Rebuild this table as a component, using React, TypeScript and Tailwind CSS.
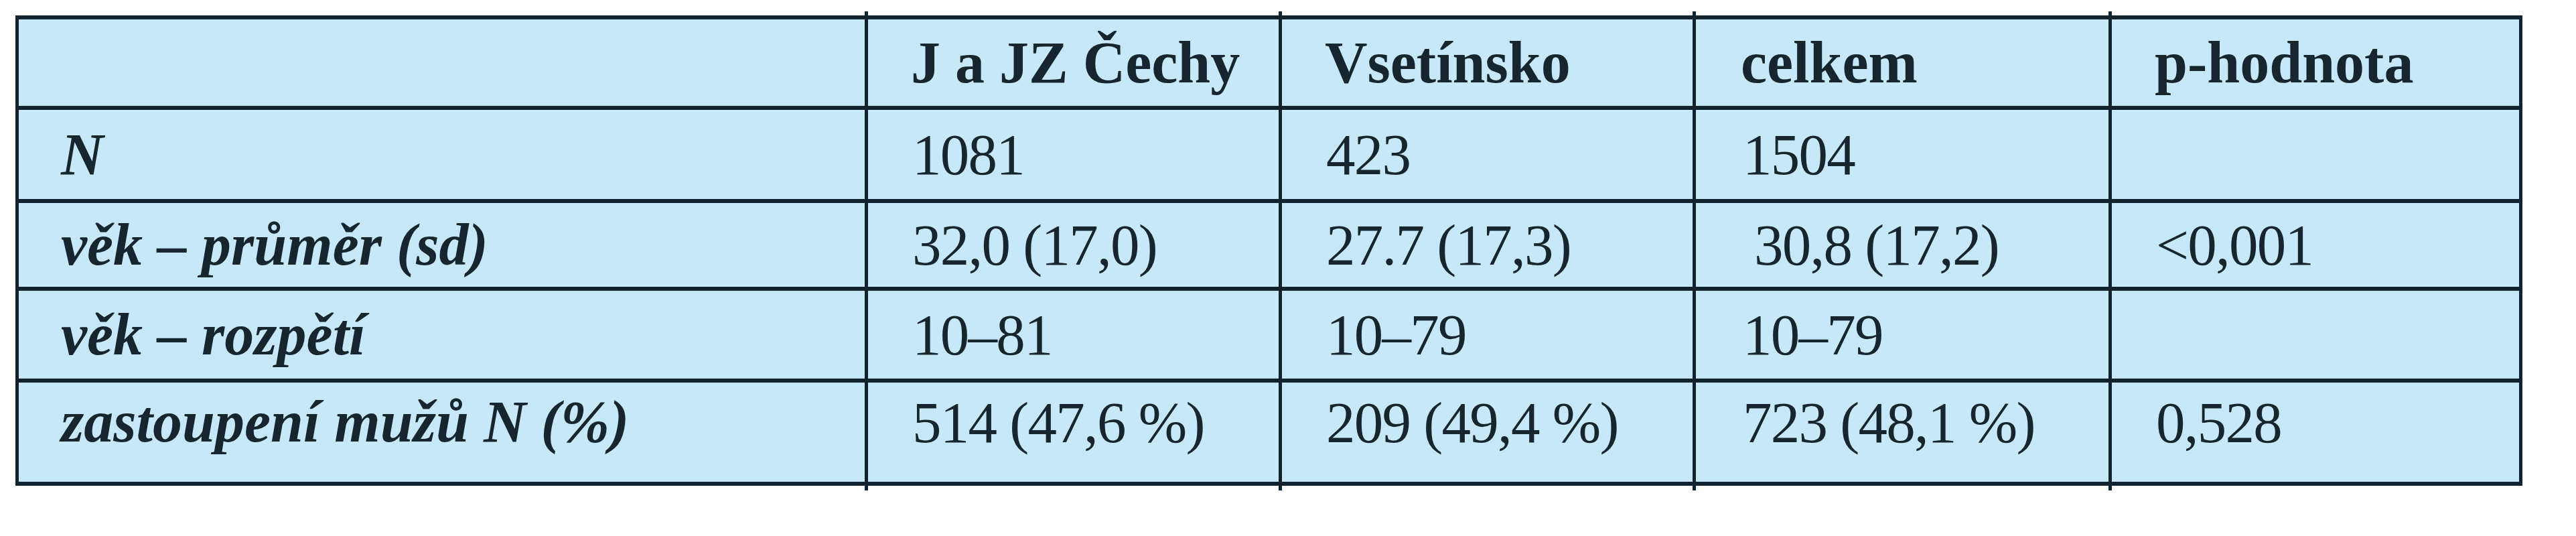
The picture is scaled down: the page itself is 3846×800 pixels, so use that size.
const header = ["", "J a JZ Čechy", "Vsetínsko", "celkem", "p-hodnota"];

const rows: { label: string; cells: string[] }[] = [
  { label: "N", cells: ["1081", "423", "1504", ""] },
  { label: "věk – průměr (sd)", cells: ["32,0 (17,0)", "27.7 (17,3)", "30,8 (17,2)", "<0,001"] },
  { label: "věk – rozpětí", cells: ["10–81", "10–79", "10–79", ""] },
  { label: "zastoupení mužů N (%)", cells: ["514 (47,6 %)", "209 (49,4 %)", "723 (48,1 %)", "0,528"] },
];

const rowHeights = ["h-[129px]", "h-[133px]", "h-[125px]", "h-[131px]", "h-[148px]"];

// interior column lines poke out a few px above and below the frame
const tickLefts = ["left-[1268px]", "left-[1886px]", "left-[2504px]", "left-[3125px]"];

export default function App() {
  return (
    <div className="min-h-[800px] w-[3846px] bg-white pt-[23px] pl-[23px] text-[#16262f] [font-family:'Liberation_Serif',serif]">
      <div className="relative w-[3743px] bg-[#10232e] p-[6px_5px]">
        {tickLefts.map((l) => (
          <div key={"t" + l} className={`absolute -top-[6px] h-[6px] w-[5px] bg-[#10232e] ${l}`} />
        ))}
        {tickLefts.map((l) => (
          <div key={"b" + l} className={`absolute -bottom-[7px] h-[7px] w-[5px] bg-[#10232e] ${l}`} />
        ))}
        <div className="grid grid-cols-[1263px_613px_613px_616px_608px] gap-x-[5px] gap-y-[6px]">
          {header.map((h, i) => (
            <div
              key={"h" + i}
              className={`flex items-center bg-[#c7e8f8] ${rowHeights[0]} ${i === 3 ? "pl-[67px]" : "pl-[64px]"} text-[88px] leading-none font-bold`}
            >
              {h}
            </div>
          ))}
          {rows.map((r, ri) => {
            const last = ri === rows.length - 1;
            const h = rowHeights[ri + 1];
            return [
              <div
                key={"l" + ri}
                className={`flex items-center bg-[#c7e8f8] ${h} ${last ? "pb-[30px]" : ""} pl-[63px] text-[88px] leading-none font-bold italic`}
              >
                {r.label}
              </div>,
              ...r.cells.map((c, ci) => (
                <div
                  key={"c" + ri + "-" + ci}
                  className={`flex items-center bg-[#c7e8f8] ${h} ${last ? "pb-[30px]" : ""} ${ci === 2 ? "pl-[70px]" : "pl-[66px]"} text-[87px] leading-none tracking-[-0.02em]`}
                >
                  <span className={ci === 2 && ri === 1 ? "ml-[17px]" : ""}>{c}</span>
                </div>
              )),
            ];
          })}
        </div>
      </div>
    </div>
  );
}
